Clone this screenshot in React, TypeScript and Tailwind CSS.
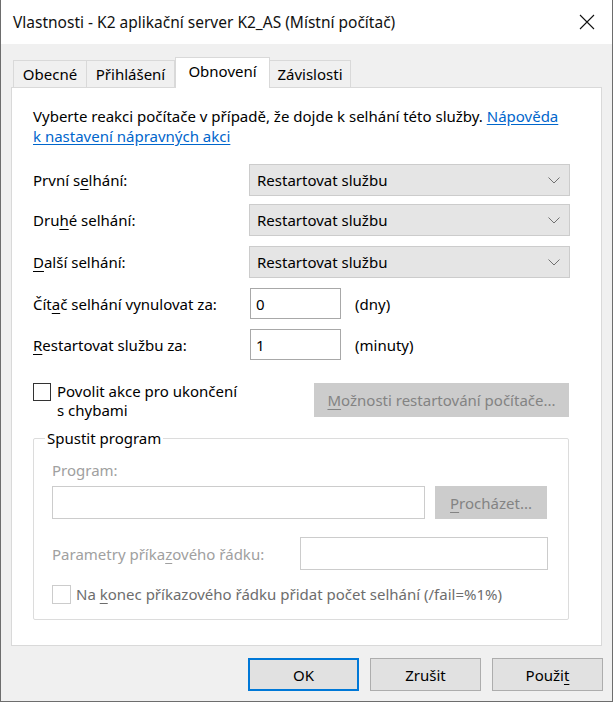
import React from "react";

const U = ({ children }: { children: React.ReactNode }) => (
  <span className="underline underline-offset-[3px] decoration-1">{children}</span>
);

const Combo = () => (
  <div className="w-[321px] h-[32px] bg-[#e5e5e5] border border-[#cccccc] flex items-center justify-between pl-[7px] pr-[8px]">
    <span>Restartovat službu</span>
    <svg width="12" height="7" viewBox="0 0 12 7" className="mr-[1px]">
      <polyline points="0.5,0.5 6,6 11.5,0.5" fill="none" stroke="#707070" strokeWidth="1" />
    </svg>
  </div>
);

const Btn = ({ children, primary }: { children: React.ReactNode; primary?: boolean }) => (
  <div
    className={
      "w-[111px] h-[33px] flex items-center justify-center bg-[#e1e1e1] " +
      (primary ? "border-2 border-[#0078d7]" : "border border-[#adadad]")
    }
  >
    {children}
  </div>
);

export default function App() {
  return (
    <div className="w-[613px] h-[702px] bg-[#f0f0f0] border-l border-r border-b border-[#6d6d6d] flex flex-col font-['Noto_Sans',sans-serif] text-[15px] leading-[20px] text-black">
      {/* Title bar */}
      <div className="h-[44px] bg-white flex items-center justify-between pl-[12px] pr-[17px] shrink-0">
        <span className="text-[15.5px] text-[#111]">Vlastnosti - K2 aplikační server K2_AS (Místní počítač)</span>
        <svg width="16" height="16" viewBox="0 0 16 16">
          <path d="M1 1 L15 15 M15 1 L1 15" stroke="#111" strokeWidth="1.1" fill="none" />
        </svg>
      </div>

      {/* Body */}
      <div className="pt-[13px] pl-[10px] pr-[10px]">
        {/* Tabs */}
        <div className="flex items-end h-[30px] pl-[2px] relative z-10">
          <div className="w-[74px] h-[27px] border border-b-0 border-[#d9d9d9] flex items-center justify-center">Obecné</div>
          <div className="w-[88px] h-[27px] border-r border-t border-[#d9d9d9] flex items-center justify-center">Přihlášení</div>
          <div className="w-[95px] h-[31px] -mb-[1px] bg-white border border-b-0 border-[#d9d9d9] flex items-start justify-center pt-[3px]">Obnovení</div>
          <div className="w-[81px] h-[27px] border-r border-t border-[#d9d9d9] flex items-center justify-center">Závislosti</div>
        </div>

        {/* Panel */}
        <div className="h-[559px] bg-white border border-[#d9d9d9] pl-[21px] pt-[18px] flex flex-col">
          <p className="w-[536px]">
            Vyberte reakci počítače v případě, že dojde k selhání této služby.{" "}
            <span className="text-[#0066cc] underline underline-offset-[2px]">Nápověda k nastavení nápravných akci</span>
          </p>

          <div className="flex items-center mt-[18px]">
            <span className="w-[216px]">První s<U>e</U>lhání:</span>
            <Combo />
          </div>
          <div className="flex items-center mt-[8px]">
            <span className="w-[216px]">Dru<U>h</U>é selhání:</span>
            <Combo />
          </div>
          <div className="flex items-center mt-[10px]">
            <span className="w-[216px]"><U>D</U>alší selhání:</span>
            <Combo />
          </div>

          <div className="flex items-center mt-[10px]">
            <span className="w-[217px]">Čít<U>a</U>č selhání vynulovat za:</span>
            <div className="w-[91px] h-[31px] border border-[#a8a8a8] flex items-center pl-[5px]">0</div>
            <span className="ml-[14px]">(dny)</span>
          </div>
          <div className="flex items-center mt-[10px]">
            <span className="w-[217px]"><U>R</U>estartovat službu za:</span>
            <div className="w-[91px] h-[31px] border border-[#a8a8a8] flex items-center pl-[5px]">1</div>
            <span className="ml-[14px]">(minuty)</span>
          </div>

          <div className="flex items-start h-[34px] mt-[23px]">
            <div className="w-[18px] h-[18px] border border-[#333] bg-white shrink-0" />
            <div className="ml-[6px] w-[257px] leading-[19px] -mt-[1px]">
              Povolit akce pro ukončení
              <br />s chybami
            </div>
            <div className="w-[255px] h-[34px] bg-[#cccccc] border border-[#cccccc] text-[#838383] flex items-center justify-center">
              <span><U>M</U>ožnosti restartování počítače...</span>
            </div>
          </div>

          {/* Group box */}
          <div className="relative mt-[21px] w-[536px] h-[182px] border border-[#dcdcdc] rounded-[2px] pl-[18px]">
            <span className="absolute -top-[11px] left-[11px] bg-white px-[2px]">Spustit program</span>
            <div className="mt-[21px] text-[#a0a0a0]">Program:</div>
            <div className="flex items-center mt-[6px]">
              <div className="w-[373px] h-[33px] border border-[#cccccc]" />
              <div className="ml-[10px] w-[112px] h-[33px] bg-[#cccccc] text-[#838383] flex items-center justify-center">
                <span><U>P</U>rocházet...</span>
              </div>
            </div>
            <div className="flex items-center mt-[18px]">
              <span className="w-[248px] text-[#a0a0a0]">Parametry příka<U>z</U>ového řádku:</span>
              <div className="w-[248px] h-[33px] border border-[#cccccc]" />
            </div>
            <div className="flex items-center mt-[14px]">
              <div className="w-[19px] h-[19px] border border-[#cccccc] shrink-0" />
              <span className="ml-[5px] text-[#6d6d6d]">Na <U>k</U>onec příkazového řádku přidat počet selhání (/fail=%1%)</span>
            </div>
          </div>
        </div>
      </div>

      {/* Buttons */}
      <div className="flex justify-end gap-[11px] pr-[9px] mt-[12px]">
        <Btn primary>OK</Btn>
        <Btn>Zrušit</Btn>
        <Btn>Použi<U>t</U></Btn>
      </div>
    </div>
  );
}
